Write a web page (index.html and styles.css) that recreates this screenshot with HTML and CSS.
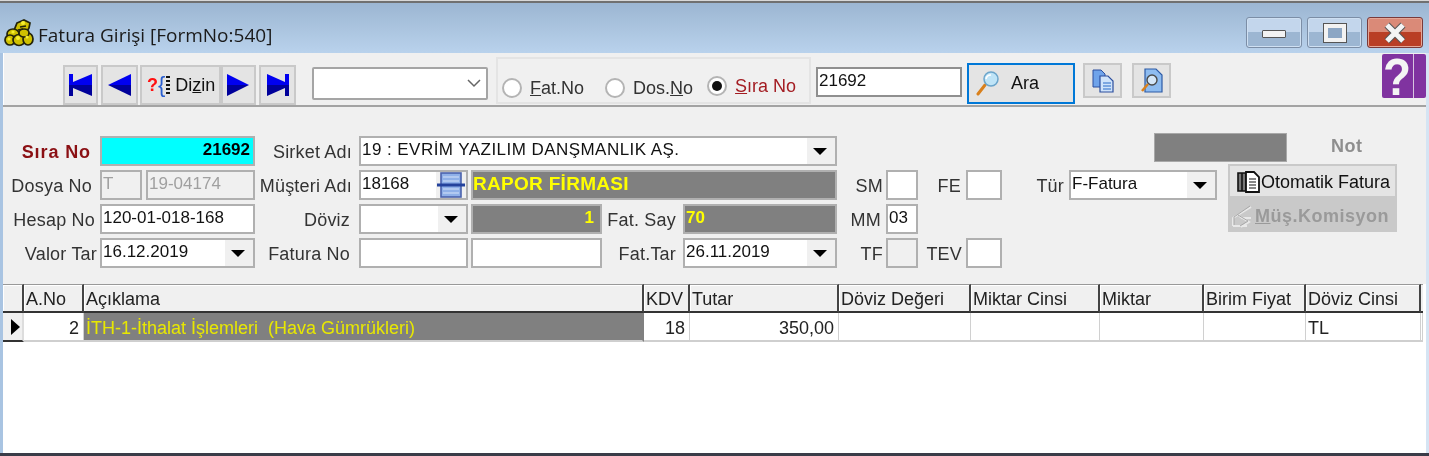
FILE: index.html
```html
<!DOCTYPE html>
<html>
	<head>
		<meta charset="UTF-8"/>
		<title>Fatura Girişi [FormNo:540]</title>
		<link rel="stylesheet" href="styles.css">
	</head>
	<body>
		<div class="window">
			<div class="titlebar">
				<svg class="app-icon" width="30" height="28" viewBox="0 0 30 28">
					<g fill="#cfc000" stroke="#23230a" stroke-width="1.7">
						<path d="M13 4 L20 1 L26 4 L25 9 L22 14 L9 14 Z"/>
						<ellipse cx="9" cy="15" rx="6" ry="5"/>
						<ellipse cx="6" cy="21" rx="5" ry="5"/>
						<ellipse cx="15" cy="21" rx="6" ry="5.5"/>
						<ellipse cx="24" cy="20" rx="5" ry="6"/>
						<ellipse cx="20" cy="14" rx="5" ry="4"/>
					</g>
					<g fill="#f6ee30">
						<circle cx="19" cy="4" r="2"/>
						<circle cx="9" cy="13" r="1.6"/>
						<circle cx="5" cy="20" r="1.6"/>
						<circle cx="14" cy="19" r="2"/>
						<circle cx="23" cy="18" r="1.6"/>
					</g>
					<path d="M16 8l6-1M14 11l5-1" stroke="#23230a" stroke-width="1.3"/>
				</svg>
				<span class="title-text">Fatura Girişi [FormNo:540]</span>
				<span class="caption-buttons">
					<span class="caption-btn"><span class="glyph-min"></span></span>
					<span class="caption-btn caption-max"><span class="glyph-max"></span></span>
					<span class="caption-btn caption-close">
						<svg width="26" height="22" viewBox="0 0 26 22">
							<path d="M5 3 L21 19 M21 3 L5 19" stroke="#555" stroke-width="7"/>
							<path d="M5 3 L21 19 M21 3 L5 19" stroke="#f4f4f4" stroke-width="5"/>
						</svg>
					</span>
				</span>
			</div>

			<div class="toolbar">
				<span class="nav-btn nav-first">
					<svg width="24" height="22" viewBox="0 0 24 22"><path fill="#0000f0" d="M0 0h4v8l19-8v11H0z"/><path fill="#00009a" d="M0 11h23v11L4 14v8H0z"/></svg>
				</span>
				<span class="nav-btn nav-prev">
					<svg width="24" height="22" viewBox="0 0 24 22"><path fill="#0000f0" d="M0 11 23 0v11z"/><path fill="#00009a" d="M0 11h23v11z"/></svg>
				</span>
				<span class="nav-btn nav-index">
					<span class="q">?</span><span class="brace">{</span><span class="dots"></span>
					<span class="nav-index-text">Di<u>z</u>in</span>
				</span>
				<span class="nav-btn nav-next">
					<svg width="23" height="22" viewBox="0 0 23 22"><path fill="#0000f0" d="M0 0 22 11H0z"/><path fill="#00009a" d="M0 11h22L0 22z"/></svg>
				</span>
				<span class="nav-btn nav-last">
					<svg width="24" height="22" viewBox="0 0 24 22"><path fill="#0000f0" d="M1 0l18 8V0h4v11H1z"/><path fill="#00009a" d="M1 11h22v11h-4v-8L1 22z"/></svg>
				</span>

				<span class="search-combo">
					<svg width="14" height="9" viewBox="0 0 14 9"><path d="M1 1l6 6 6-6" fill="none" stroke="#666" stroke-width="1.5"/></svg>
				</span>

				<span class="radio-group">
					<span class="radio-item radio-fat"><span class="radio"></span><span><u>F</u>at.No</span></span>
					<span class="radio-item radio-dos"><span class="radio"></span><span>Dos.<u>N</u>o</span></span>
					<span class="radio-item radio-sira"><span class="radio radio-on"></span><span class="red"><u>S</u>ıra No</span></span>
				</span>

				<span class="search-input">21692</span>

				<span class="ara-btn">
					<svg width="24" height="25" viewBox="0 0 24 25">
						<path d="M9 14 L2 23" stroke="#d9801c" stroke-width="3" stroke-linecap="round"/>
						<circle cx="15" cy="8" r="7" fill="#bfe4f7" stroke="#6ba5cb" stroke-width="1.5"/>
						<path d="M10 8a5 5 0 0 1 5-4" stroke="#fff" stroke-width="1.6" fill="none"/>
					</svg>
					<span>Ara</span>
				</span>

				<span class="icon-btn">
					<svg width="22" height="24" viewBox="0 0 22 24">
						<path d="M1 1h8l4 4v13H1z" fill="#6fa3ea" stroke="#2c4f9e"/>
						<path d="M8 7h8l5 5v11H8z" fill="#cfe3fa" stroke="#2c4f9e" stroke-width="1.2"/>
						<path d="M11 14h8M11 17h8M11 20h8" stroke="#2a6cc8" stroke-width="1.2"/>
					</svg>
				</span>
				<span class="icon-btn icon-btn-2">
					<svg width="22" height="26" viewBox="0 0 22 26">
						<path d="M4 1h11l6 6v17H4z" fill="#8ebcf0" stroke="#2c5aa6" stroke-width="1.2"/>
						<circle cx="11" cy="12" r="5" fill="#d4e6f7" stroke="#4a4a4a" stroke-width="1.4"/>
						<path d="M7 16 L1 23" stroke="#d9801c" stroke-width="2.5"/>
					</svg>
				</span>

				<span class="help-btn"><span class="help-mark">?</span></span>
			</div>

			<div class="form">
				<label class="lbl lbl-sira c-l1 r1">Sıra No</label>
				<span class="field field-cyan c-a r1">21692</span>
				<label class="lbl c-l2 r1">Sirket Adı</label>
				<span class="field combo field-wide c-wide r1">19 : EVRİM YAZILIM DANŞMANLIK AŞ.<span class="arrow"></span></span>
				<span class="note-box r1"></span>
				<span class="note-label r1">Not</span>

				<label class="lbl pad-8 c-l1 r2">Dosya No</label>
				<span class="field field-off c-t r2">T</span>
				<span class="field field-off c-t2 r2">19-04174</span>
				<label class="lbl c-l2 r2">Müşteri Adı</label>
				<span class="field c-b r2">18168
					<svg class="lookup" width="30" height="26" viewBox="0 0 30 26">
						<rect x="5" y="1" width="20" height="24" fill="#8fb0e8" stroke="#4a62ac" stroke-width="1.6"/>
						<path d="M7 5h16M7 9h16M7 17h16M7 21h16" stroke="#d4e2f8"/>
						<path d="M1 13h28" stroke="#24429c" stroke-width="3"/>
					</svg>
				</span>
				<span class="field field-gray field-big c-cw r2">RAPOR FİRMASI</span>
				<label class="lbl pad-3 c-l3 r2">SM</label>
				<span class="field c-s r2"></span>
				<label class="lbl pad-5 c-l4 r2">FE</label>
				<span class="field c-f r2"></span>
				<label class="lbl pad-5 c-l5 r2">Tür</label>
				<span class="field combo c-tur r2">F-Fatura<span class="arrow"></span></span>
				<div class="side-buttons">
					<span class="side-btn">
						<svg width="24" height="22" viewBox="0 0 24 22">
							<path d="M1 2h4v18H1zM5 2h4v18H5z" fill="#777" stroke="#111" stroke-width="1.6"/>
							<path d="M9 1h8l5 5v15H9z" fill="#fff" stroke="#111" stroke-width="1.8"/>
							<path d="M12 8h7M12 11h7M12 14h7M12 17h7" stroke="#111" stroke-width="1.2"/>
						</svg>Otomatik Fatura
					</span>
					<span class="side-btn side-btn-off">
						<svg width="24" height="24" viewBox="0 0 24 24">
							<path d="M2 22V14L20 3M8 12l10 6-8 5M2 22h14M10 14h10" fill="none" stroke="#e8e8e8" stroke-width="2"/>
							<path d="M3 21V13L19 2M7 11l10 6-8 5" fill="none" stroke="#a8a8a8"/>
						</svg><span><u>M</u>üş.Komisyon</span>
					</span>
				</div>

				<label class="lbl pad-5 c-l1 r3">Hesap No</label>
				<span class="field c-a r3">120-01-018-168</span>
				<label class="lbl pad-9 c-l2 r3">Döviz</label>
				<span class="field combo c-b r3"><span class="arrow"></span></span>
				<span class="field field-gray field-num c-n r3">1</span>
				<label class="lbl c-l6 r3">Fat. Say</label>
				<span class="field field-gray field-num-left c-d r3">70</span>
				<label class="lbl pad-5 c-l3 r3">MM</label>
				<span class="field c-s r3">03</span>

				<label class="lbl pad-3 c-l1 r4">Valor Tar</label>
				<span class="field combo c-a r4">16.12.2019<span class="arrow"></span></span>
				<label class="lbl pad-9 c-l2 r4">Fatura No</label>
				<span class="field c-b r4"></span>
				<span class="field c-n r4"></span>
				<label class="lbl c-l6 r4">Fat.Tar</label>
				<span class="field combo c-d r4">26.11.2019<span class="arrow"></span></span>
				<label class="lbl pad-3 c-l3 r4">TF</label>
				<span class="field field-off c-s r4"></span>
				<label class="lbl pad-4 c-l4 r4">TEV</label>
				<span class="field c-f r4"></span>
			</div>

			<table class="lines">
				<colgroup>
					<col class="w-ind"><col class="w-no"><col class="w-desc"><col class="w-kdv"><col class="w-tutar">
					<col class="w-dd"><col class="w-mc"><col class="w-m"><col class="w-bf"><col class="w-dc"><col class="w-end">
				</colgroup>
				<thead>
					<tr>
						<th></th><th>A.No</th><th>Açıklama</th><th>KDV</th><th>Tutar</th>
						<th>Döviz Değeri</th><th>Miktar Cinsi</th><th>Miktar</th><th>Birim Fiyat</th><th>Döviz Cinsi</th><th class="end"></th>
					</tr>
				</thead>
				<tbody>
					<tr>
						<td class="ind"><span class="ind-arrow"></span></td>
						<td class="num">2</td>
						<td class="desc">İTH-1-İthalat İşlemleri&nbsp; (Hava Gümrükleri)</td>
						<td class="num">18</td>
						<td class="num">350,00</td>
						<td></td><td></td><td></td><td></td>
						<td>TL</td>
						<td class="end"></td>
					</tr>
				</tbody>
			</table>
		</div>
	</body>
</html>
```

FILE: styles.css
```css
html, body {
	margin: 0;
	padding: 0;
	height: 100%;
	overflow: hidden;
	background: #fff;
	font-family: "Liberation Sans", Arial, sans-serif;
	color: #111;
}

.window {
	width: 1429px;
	height: 456px;
	box-sizing: border-box;
	display: flex;
	flex-direction: column;
	border-top: 1px solid #d8d8d8;
	border-bottom: 3px solid #3a3c48;
	background: #fff;
	box-shadow: inset 3px 0 0 #a9c4e2, inset -3px 0 0 #d5e4f3;
	filter: blur(0.35px);
}

/* title bar */
.titlebar {
	height: 52px;
	flex: none;
	display: flex;
	align-items: flex-end;
	background: linear-gradient(#9cb6d2, #b9d2ec);
	border-top: 2px solid #707070;
	padding-left: 4px;
	box-sizing: border-box;
}

.app-icon {
	margin-bottom: 6px;
}

.title-text {
	font-family: "Open Sans", sans-serif;
	font-size: 19px;
	margin: 0 0 5px 4px;
	color: #1a1a1a;
}

.caption-buttons {
	margin-left: auto;
	margin-bottom: 5px;
	margin-right: 6px;
	display: flex;
	gap: 5px;
}

.caption-btn {
	width: 56px;
	height: 31px;
	box-sizing: border-box;
	border: 1px solid #7c8ea6;
	border-radius: 3px;
	background: linear-gradient(#c3d6ec 50%, #9cb6d2 50%);
	box-shadow: inset 0 0 0 1px #cfe0f2;
	display: flex;
	align-items: center;
	justify-content: center;
}

.caption-max {
	width: 55px;
}

.caption-close {
	background: linear-gradient(#da8a78 50%, #b93e25 50%);
	border-color: #7a3a3a;
	box-shadow: inset 0 0 0 1px #e5a797;
}

.glyph-min {
	width: 22px;
	height: 6px;
	background: #f2f2f2;
	border: 1px solid #555;
	border-radius: 1px;
	margin-top: 2px;
}

.glyph-max {
	width: 14px;
	height: 10px;
	border: 4px solid #f2f2f2;
	outline: 1px solid #555;
	background: #8ca6c4;
}

/* toolbar */
.toolbar {
	height: 54px;
	flex: none;
	box-sizing: border-box;
	margin: 0 3px;
	background: #f0f0f0;
	border-bottom: 2px solid #a3a3a3;
	box-shadow: inset 1px 0 0 #fff;
	display: flex;
	align-items: flex-start;
	font-size: 18px;
}

.nav-btn {
	height: 40px;
	margin-top: 12px;
	box-sizing: border-box;
	border: 2px solid #c9c9c9;
	background: #e4e4e4;
	display: flex;
	align-items: center;
	justify-content: center;
}

.nav-first { width: 35px; margin-left: 60px; }
.nav-prev { width: 37px; margin-left: 3px; }
.nav-index { width: 81px; margin-left: 2px; justify-content: flex-start; padding-left: 5px; }
.nav-next { width: 35px; }
.nav-last { width: 37px; margin-left: 3px; }

.q {
	color: #ff1010;
	font-weight: bold;
}

.brace {
	color: #2b5fd0;
	font-size: 22px;
	line-height: 22px;
}

.dots {
	width: 4px;
	height: 19px;
	margin-left: 1px;
	background: repeating-linear-gradient(#111 0 2px, #e4e4e4 2px 4px);
}

.nav-index-text {
	margin-left: 5px;
}

.search-combo {
	width: 176px;
	height: 33px;
	margin: 14px 0 0 16px;
	box-sizing: border-box;
	background: #fff;
	border: 2px solid #a5a5a5;
	border-radius: 2px;
	display: flex;
	align-items: center;
	justify-content: flex-end;
	padding-right: 5px;
}

.radio-group {
	width: 315px;
	height: 47px;
	margin: 4px 0 0 8px;
	box-sizing: border-box;
	border: 2px solid #e4e4e4;
	display: flex;
	color: #333;
}

.radio-item {
	display: flex;
	align-items: center;
	gap: 8px;
}

.radio-fat { margin: 14px 0 0 4px; height: 30px; }
.radio-dos { margin: 14px 0 0 21px; height: 30px; }
.radio-sira { margin: 12px 0 0 14px; height: 30px; }

.radio {
	width: 20px;
	height: 20px;
	box-sizing: border-box;
	border: 2px solid #b4b4b4;
	border-radius: 50%;
	background: #fff;
	display: inline-block;
	position: relative;
}

.radio-on::after {
	content: "";
	position: absolute;
	left: 3px;
	top: 3px;
	width: 10px;
	height: 10px;
	border-radius: 50%;
	background: #111;
}

.red {
	color: #a31c22;
}

.search-input {
	width: 146px;
	height: 30px;
	margin: 14px 0 0 5px;
	box-sizing: border-box;
	border: 2px solid #8f8f8f;
	background: #fff;
	padding-left: 1px;
	font-size: 17px;
	line-height: 24px;
}

.ara-btn {
	width: 108px;
	height: 41px;
	margin: 10px 0 0 5px;
	box-sizing: border-box;
	border: 2px solid #0078d7;
	background: #e4e4e4;
	display: flex;
	align-items: center;
	padding-left: 7px;
	gap: 11px;
}

.icon-btn {
	width: 39px;
	height: 35px;
	margin: 10px 0 0 8px;
	box-sizing: border-box;
	border: 2px solid #c9c9c9;
	background: #e4e4e4;
	display: flex;
	align-items: center;
	justify-content: center;
}

.icon-btn-2 {
	margin-left: 10px;
}

.help-btn {
	width: 44px;
	height: 44px;
	margin: 1px 0 0 auto;
	box-sizing: border-box;
	background: linear-gradient(90deg, #8033a0 31px, #d8c6e0 31px, #d8c6e0 32px, #8033a0 32px);
	border-radius: 2px;
	color: #f4f4f4;
	font-weight: bold;
	font-size: 52px;
	line-height: 46px;
	padding-left: 1px;
}

.help-mark {
	display: block;
	width: 29px;
	transform: scaleX(0.88);
	transform-origin: left center;
}

/* form */
.form {
	height: 177px;
	flex: none;
	box-sizing: border-box;
	margin: 0 3px;
	padding: 29px 0 0 1px;
	background: #f0f0f0;
	display: grid;
	/* lines follow the edges of the fields */
	grid-template-columns: 96px 42px 4px 109px 104px 109px 3px 131px 81px 154px 49px 32px 48px 36px 67px 85px 63px 11px 59px 110px;
	grid-template-rows: repeat(4, 30px);
	row-gap: 4px;
	font-size: 17px;
}

.r1 { grid-row: 1; }
.r2 { grid-row: 2; }
.r3 { grid-row: 3; }
.r4 { grid-row: 4; }

.c-l1 { grid-column: 1; }
.c-a { grid-column: 2 / 5; }
.c-t { grid-column: 2; }
.c-t2 { grid-column: 4; }
.c-l2 { grid-column: 5; }
.c-b { grid-column: 6; }
.c-wide { grid-column: 6 / 11; }
.c-cw { grid-column: 8 / 11; }
.c-n { grid-column: 8; }
.c-l6 { grid-column: 9; }
.c-d { grid-column: 10; }
.c-l3 { grid-column: 11; }
.c-s { grid-column: 12; }
.c-l4 { grid-column: 13; }
.c-f { grid-column: 14; }
.c-l5 { grid-column: 15; }
.c-tur { grid-column: 16 / 18; }

.lbl {
	text-align: right;
	font-size: 18px;
	letter-spacing: 0.2px;
	line-height: 32px;
	padding-right: 7px;
	white-space: nowrap;
	color: #333;
}

.pad-3 { padding-right: 3px; }
.pad-4 { padding-right: 4px; }
.pad-5 { padding-right: 5px; }
.pad-8 { padding-right: 8px; }
.pad-9 { padding-right: 9px; }

.lbl-sira {
	color: #8b1014;
	font-weight: bold;
	letter-spacing: 0.9px;
	padding-right: 9px;
}

.field {
	box-sizing: border-box;
	border: 2px solid #b0b0b0;
	background: #fff;
	padding-left: 1px;
	line-height: 24px;
	white-space: nowrap;
	position: relative;
	overflow: hidden;
}

.field-wide {
	letter-spacing: 0.45px;
}

.field-cyan {
	background: #00ffff;
	color: #000;
	font-weight: bold;
	text-align: right;
	padding-right: 3px;
}

.field-off {
	background: #f0f0f0;
	color: #a0a0a0;
}

.field-gray {
	background: #808080;
	color: #ffff00;
	font-weight: bold;
}

.field-big {
	font-size: 19px;
	letter-spacing: 0.3px;
	padding-left: 0;
}

.field-num {
	text-align: right;
	padding-right: 6px;
}

.combo .arrow {
	position: absolute;
	right: 0;
	top: 0;
	bottom: 0;
	width: 28px;
	background: #f0f0f0;
}

.combo .arrow::after {
	content: "";
	position: absolute;
	left: 6px;
	top: 10px;
	border-left: 7px solid transparent;
	border-right: 7px solid transparent;
	border-top: 7px solid #000;
}

.lookup {
	position: absolute;
	right: 0;
	top: 0;
	background: #f0f0f0;
}

.note-box {
	grid-column: 17 / 20;
	width: 133px;
	height: 29px;
	margin-top: -3px;
	box-sizing: border-box;
	background: #808080;
	border: 1px solid #a8a8a8;
}

.note-label {
	grid-column: 20;
	padding-left: 44px;
	font-weight: bold;
	color: #8e8e8e;
	font-size: 18px;
	letter-spacing: 0.5px;
	line-height: 20px;
}

.side-buttons {
	grid-column: 19 / 21;
	grid-row: 2 / 4;
	margin: -6px 0 0 0;
	width: 169px;
	display: flex;
	flex-direction: column;
}

.side-btn {
	height: 34px;
	box-sizing: border-box;
	border: 2px solid #c9c9c9;
	background: #e4e4e4;
	display: flex;
	align-items: center;
	padding: 2px 0 0 7px;
	font-size: 18px;
	white-space: nowrap;
}

.side-btn-off {
	background: #c9c9c9;
	color: #9a9a9a;
	font-weight: bold;
	letter-spacing: 0.5px;
	padding-left: 1px;
}

/* lines */
.lines {
	margin: 0 0 0 3px;
	border-collapse: separate;
	border-spacing: 0;
	table-layout: fixed;
	width: 1420px;
	font-size: 18px;
	color: #222;
	background: #fff;
}

.w-ind { width: 21px; }
.w-no { width: 60px; }
.w-desc { width: 560px; }
.w-kdv { width: 46px; }
.w-tutar { width: 149px; }
.w-dd { width: 132px; }
.w-mc { width: 129px; }
.w-m { width: 104px; }
.w-bf { width: 102px; }
.w-dc { width: 115px; }
.w-end { width: 2px; }

.lines th {
	height: 29px;
	box-sizing: border-box;
	background: #f0f0f0;
	border-top: 1px solid #999;
	border-right: 2px solid #444;
	border-bottom: 2px solid #333;
	box-shadow: inset 1px 1px 0 #fff;
	font-weight: normal;
	text-align: left;
	padding: 2px 0 0 2px;
	white-space: nowrap;
}

.lines th.end {
	border-right: 0;
	box-shadow: none;
	padding: 0;
}

.lines td {
	height: 29px;
	box-sizing: border-box;
	border-right: 1px solid #d0d0d0;
	border-bottom: 2px solid #cfcfcf;
	padding: 3px 4px 0 2px;
	white-space: nowrap;
}

.lines td.end {
	padding: 0;
}

.lines td.num {
	text-align: right;
}

.lines td.desc {
	background: #808080;
	color: #e8e800;
	border-right: 2px solid #808080;
}

.lines td.ind {
	background: #f0f0f0;
	border-right: 2px solid #ddd;
	border-bottom: 2px solid #333;
	padding: 0 0 0 8px;
}

.ind-arrow {
	display: block;
	width: 0;
	border-top: 8px solid transparent;
	border-bottom: 8px solid transparent;
	border-left: 9px solid #000;
}
```
